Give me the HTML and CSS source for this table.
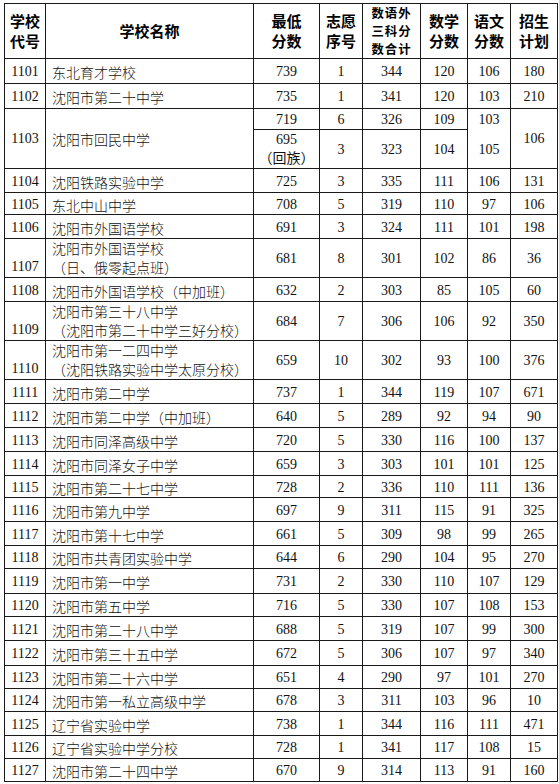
FILE: index.html
```html
<!DOCTYPE html>
<html lang="zh-CN">
<head>
<meta charset="utf-8">
<title>沈阳市高中录取分数</title>
<link rel="stylesheet" href="styles.css">
</head>
<body>
<table class="sheet">
  <colgroup>
    <col class="c-code"><col class="c-name"><col class="c-min"><col class="c-ord"><col class="c-sum"><col class="c-math"><col class="c-chn"><col class="c-plan">
  </colgroup>
  <thead>
    <tr class="h54">
      <th>学校<br>代号</th><th>学校名称</th><th>最低<br>分数</th><th>志愿<br>序号</th><th class="three">数语外<br>三科分<br>数合计</th><th>数学<br>分数</th><th>语文<br>分数</th><th>招生<br>计划</th>
    </tr>
  </thead>
  <tbody>
    <tr class="h25"><td>1101</td><td class="nm">东北育才学校</td><td>739</td><td>1</td><td>344</td><td>120</td><td>106</td><td>180</td></tr>
    <tr class="h25"><td>1102</td><td class="nm">沈阳市第二十中学</td><td>735</td><td>1</td><td>341</td><td>120</td><td>103</td><td>210</td></tr>
    <tr class="h21"><td rowspan="2" class="mid">1103</td><td rowspan="2" class="nm mid">沈阳市回民中学</td><td>719</td><td>6</td><td>326</td><td>109</td><td>103</td><td rowspan="2" class="mid">106</td></tr>
    <tr class="h39"><td class="two">695<br>（回族）</td><td>3</td><td>323</td><td>104</td><td class="open">105</td></tr>
    <tr class="h24"><td>1104</td><td class="nm">沈阳铁路实验中学</td><td>725</td><td>3</td><td>335</td><td>111</td><td>106</td><td>131</td></tr>
    <tr class="h22"><td>1105</td><td class="nm">东北中山中学</td><td>708</td><td>5</td><td>319</td><td>110</td><td>97</td><td>106</td></tr>
    <tr class="h24"><td>1106</td><td class="nm">沈阳市外国语学校</td><td>691</td><td>3</td><td>324</td><td>111</td><td>101</td><td>198</td></tr>
    <tr class="h38"><td class="bot">1107</td><td class="nm two">沈阳市外国语学校<br>（日、俄零起点班）</td><td>681</td><td>8</td><td>301</td><td>102</td><td>86</td><td>36</td></tr>
    <tr class="h24"><td>1108</td><td class="nm">沈阳市外国语学校（中加班）</td><td>632</td><td>2</td><td>303</td><td>85</td><td>105</td><td>60</td></tr>
    <tr class="h39"><td class="bot">1109</td><td class="nm two">沈阳市第三十八中学<br>（沈阳市第二十中学三好分校）</td><td>684</td><td>7</td><td>306</td><td>106</td><td>92</td><td>350</td></tr>
    <tr class="h37"><td class="bot">1110</td><td class="nm two">沈阳市第一二四中学<br>（沈阳铁路实验中学太原分校）</td><td>659</td><td>10</td><td>302</td><td>93</td><td>100</td><td>376</td></tr>
    <tr class="h24"><td>1111</td><td class="nm">沈阳市第二中学</td><td>737</td><td>1</td><td>344</td><td>119</td><td>107</td><td>671</td></tr>
    <tr class="h24"><td>1112</td><td class="nm">沈阳市第二中学（中加班）</td><td>640</td><td>5</td><td>289</td><td>92</td><td>94</td><td>90</td></tr>
    <tr class="h24"><td>1113</td><td class="nm">沈阳市同泽高级中学</td><td>720</td><td>5</td><td>330</td><td>116</td><td>100</td><td>137</td></tr>
    <tr class="h24"><td>1114</td><td class="nm">沈阳市同泽女子中学</td><td>659</td><td>3</td><td>303</td><td>101</td><td>101</td><td>125</td></tr>
    <tr class="h22"><td>1115</td><td class="nm">沈阳市第二十七中学</td><td>728</td><td>2</td><td>336</td><td>110</td><td>111</td><td>136</td></tr>
    <tr class="h24"><td>1116</td><td class="nm">沈阳市第九中学</td><td>697</td><td>9</td><td>311</td><td>115</td><td>91</td><td>325</td></tr>
    <tr class="h24"><td>1117</td><td class="nm">沈阳市第十七中学</td><td>661</td><td>5</td><td>309</td><td>98</td><td>99</td><td>265</td></tr>
    <tr class="h23"><td>1118</td><td class="nm">沈阳市共青团实验中学</td><td>644</td><td>6</td><td>290</td><td>104</td><td>95</td><td>270</td></tr>
    <tr class="h25"><td>1119</td><td class="nm">沈阳市第一中学</td><td>731</td><td>2</td><td>330</td><td>110</td><td>107</td><td>129</td></tr>
    <tr class="h23"><td>1120</td><td class="nm">沈阳市第五中学</td><td>716</td><td>5</td><td>330</td><td>107</td><td>108</td><td>153</td></tr>
    <tr class="h24"><td>1121</td><td class="nm">沈阳市第二十八中学</td><td>688</td><td>5</td><td>319</td><td>107</td><td>99</td><td>300</td></tr>
    <tr class="h25"><td>1122</td><td class="nm">沈阳市第三十五中学</td><td>672</td><td>5</td><td>306</td><td>107</td><td>97</td><td>340</td></tr>
    <tr class="h23"><td>1123</td><td class="nm">沈阳市第二十六中学</td><td>651</td><td>4</td><td>290</td><td>97</td><td>101</td><td>270</td></tr>
    <tr class="h23"><td>1124</td><td class="nm">沈阳市第一私立高级中学</td><td>678</td><td>3</td><td>311</td><td>103</td><td>96</td><td>10</td></tr>
    <tr class="h24"><td>1125</td><td class="nm">辽宁省实验中学</td><td>738</td><td>1</td><td>344</td><td>116</td><td>111</td><td>471</td></tr>
    <tr class="h23"><td>1126</td><td class="nm">辽宁省实验中学分校</td><td>728</td><td>1</td><td>341</td><td>117</td><td>108</td><td>15</td></tr>
    <tr class="h23"><td>1127</td><td class="nm">沈阳市第二十四中学</td><td>670</td><td>9</td><td>314</td><td>113</td><td>91</td><td>160</td></tr>
  </tbody>
</table>
</body>
</html>
```

FILE: styles.css
```css
html, body {
  margin: 0;
  padding: 0;
  background: #ffffff;
}

.sheet {
  margin: 3px 0 0 4px;
  border-collapse: collapse;
  table-layout: fixed;
  width: 553px;
  color: #111111;
  font-family: "Liberation Serif", "Noto Sans CJK SC", serif;
  font-size: 14px;
}

.c-code { width: 41px; }
.c-name { width: 208px; }
.c-min  { width: 66px; }
.c-ord  { width: 43px; }
.c-sum  { width: 58px; }
.c-math { width: 47px; }
.c-chn  { width: 43px; }
.c-plan { width: 47px; }

.sheet th,
.sheet td {
  border: 1px solid #1a1a1a;
  padding: 0;
  text-align: center;
  vertical-align: middle;
  overflow: hidden;
  white-space: nowrap;
}

.sheet th {
  font-family: "Noto Sans CJK SC", sans-serif;
  font-weight: 700;
  font-size: 15px;
  line-height: 20px;
  color: #000000;
}

.sheet th.three {
  font-size: 12.4px;
  line-height: 18px;
  letter-spacing: 1px;
}

.sheet td {
  line-height: 16px;
  padding-top: 2px;
}

.sheet td.nm {
  text-align: left;
  padding-left: 6px;
  font-family: "Noto Sans CJK SC", sans-serif;
  font-weight: 300;
  font-size: 14px;
}

.sheet td.two {
  line-height: 19px;
  padding-top: 0;
}

.sheet td.mid {
  vertical-align: middle;
  padding-top: 0;
}

.sheet td.bot {
  vertical-align: bottom;
  padding-bottom: 2px;
}

.sheet td.open {
  border-top-style: hidden;
}

.h54 { height: 54px; }
.h39 { height: 39px; }
.h38 { height: 38px; }
.h37 { height: 37px; }
.h25 { height: 25px; }
.h24 { height: 24px; }
.h23 { height: 23px; }
.h22 { height: 22px; }
.h21 { height: 21px; }
```
